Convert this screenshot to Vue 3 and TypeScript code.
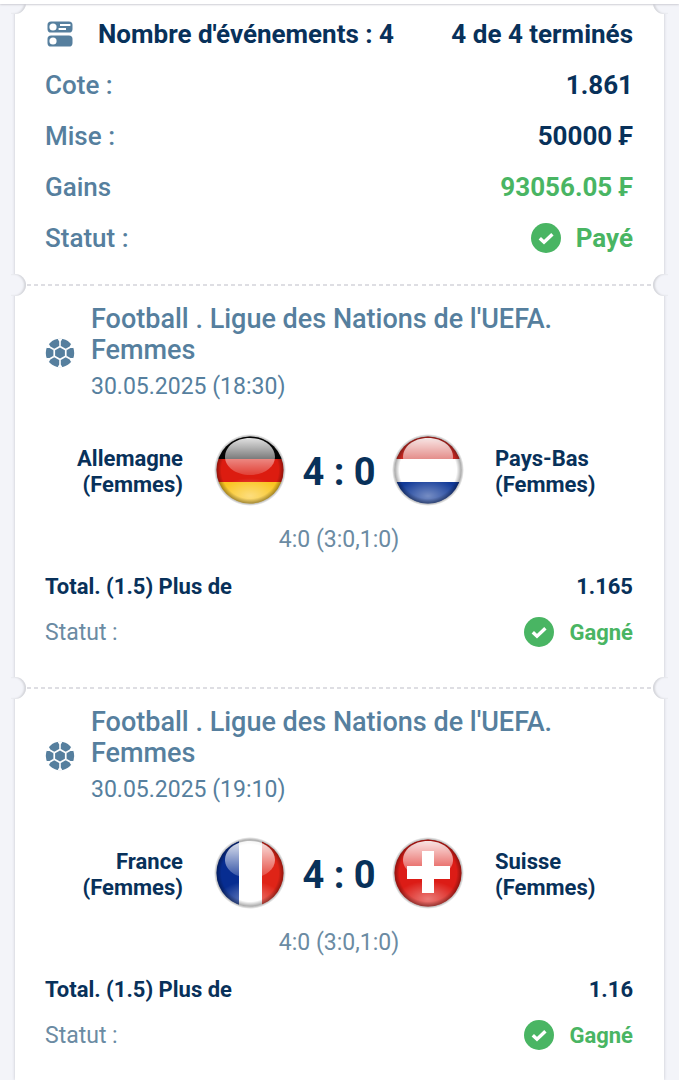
<script setup lang="ts">
type FlagCode = 'de' | 'nl' | 'fr' | 'ch'

interface Team {
  name: string
  flag: FlagCode
}

interface BetEvent {
  id: number
  league: string
  date: string
  home: Team
  away: Team
  score: string
  periods: string
  market: string
  odds: string
  status: string
}

const events: BetEvent[] = [
  {
    id: 1,
    league: "Football . Ligue des Nations de l'UEFA. Femmes",
    date: '30.05.2025 (18:30)',
    home: { name: 'Allemagne (Femmes)', flag: 'de' },
    away: { name: 'Pays-Bas (Femmes)', flag: 'nl' },
    score: '4 : 0',
    periods: '4:0 (3:0,1:0)',
    market: 'Total. (1.5) Plus de',
    odds: '1.165',
    status: 'Gagné',
  },
  {
    id: 2,
    league: "Football . Ligue des Nations de l'UEFA. Femmes",
    date: '30.05.2025 (19:10)',
    home: { name: 'France (Femmes)', flag: 'fr' },
    away: { name: 'Suisse (Femmes)', flag: 'ch' },
    score: '4 : 0',
    periods: '4:0 (3:0,1:0)',
    market: 'Total. (1.5) Plus de',
    odds: '1.16',
    status: 'Gagné',
  },
]

const sides = ['home', 'away'] as const
const seamAngles = [0, 60, 120, 180, 240, 300]
</script>

<template>
  <div class="page">
    <div class="topbar"></div>
    <main class="ticket">
      <section class="part summary">
        <h1 class="row heading">
          <svg class="list-icon" viewBox="0 0 26 26" aria-hidden="true">
            <rect x="0.5" y="0.5" width="25" height="11" rx="3.6" fill="currentColor" />
            <circle cx="6" cy="6" r="3.6" fill="#fff" />
            <path d="M13 4.1h10.4M11.6 7.9h7.4" stroke="#fff" stroke-width="2" />
            <rect x="0.5" y="14.5" width="25" height="11" rx="3.6" fill="currentColor" />
            <circle cx="6" cy="20" r="3.6" fill="#fff" />
          </svg>
          <span class="count">Nombre d'événements : 4</span>
          <span>4 de 4 terminés</span>
        </h1>
        <dl>
          <div class="row"><dt>Cote :</dt><dd>1.861</dd></div>
          <div class="row"><dt>Mise :</dt><dd>50000 ₣</dd></div>
          <div class="row"><dt>Gains</dt><dd class="won">93056.05 ₣</dd></div>
          <div class="row">
            <dt>Statut :</dt>
            <dd class="won state">
              <svg class="check" viewBox="0 0 30 30" aria-hidden="true">
                <circle cx="15" cy="15" r="15" fill="currentColor" />
                <path d="M8.8 15.2l4.2 4 8.4-8" fill="none" stroke="#fff" stroke-width="3.4" />
              </svg>
              Payé
            </dd>
          </div>
        </dl>
      </section>

      <article v-for="event in events" :key="event.id" class="part event">
        <header class="event-head">
          <svg class="ball" viewBox="-15 -15 30 30" aria-hidden="true">
            <circle r="14.2" fill="currentColor" />
            <path
              v-for="angle in seamAngles"
              :key="angle"
              d="M-.8-6L0-7.6.8-6V-11.6L2.6-14.6H-2.6L-.8-11.6z"
              :transform="`rotate(${angle})`"
              fill="#fff"
            />
            <path d="M0-7.6L6.6-3.8V3.8L0 7.6-6.6 3.8V-3.8z" fill="#fff" />
            <path d="M0-5.6L4.9-2.8V2.8L0 5.6-4.9 2.8V-2.8z" fill="currentColor" />
          </svg>
          <div>
            <h2>{{ event.league }}</h2>
            <time>{{ event.date }}</time>
          </div>
        </header>

        <div class="match">
          <template v-for="side in sides" :key="side">
            <span class="team" :class="side">{{ event[side].name }}</span>
            <svg class="flag" :class="side" viewBox="0 0 72 72" aria-hidden="true">
              <defs>
                <clipPath :id="`disc-${event.id}-${side}`"><circle cx="36" cy="36" r="33.5" /></clipPath>
                <linearGradient :id="`gloss-${event.id}-${side}`" x1="0" y1="0" x2="0" y2="1">
                  <stop offset="0" stop-color="#fff" stop-opacity="0.88" />
                  <stop offset="1" stop-color="#fff" stop-opacity="0.16" />
                </linearGradient>
                <radialGradient :id="`rim-${event.id}-${side}`">
                  <stop offset="0.84" stop-color="#000" stop-opacity="0" />
                  <stop offset="1" stop-color="#000" stop-opacity="0.38" />
                </radialGradient>
                <radialGradient :id="`glow-${event.id}-${side}`">
                  <stop offset="0" stop-color="#fff" stop-opacity="0.42" />
                  <stop offset="1" stop-color="#fff" stop-opacity="0" />
                </radialGradient>
                <radialGradient :id="`shade-${event.id}-${side}`">
                  <stop offset="0.88" stop-color="#000" stop-opacity="0.5" />
                  <stop offset="1" stop-color="#000" stop-opacity="0" />
                </radialGradient>
              </defs>
              <circle cx="36" cy="36" r="36" :fill="`url(#shade-${event.id}-${side})`" />
              <g :clip-path="`url(#disc-${event.id}-${side})`">
                <template v-if="event[side].flag === 'de'">
                  <rect width="72" height="25" fill="#050505" />
                  <rect y="25" width="72" height="23" fill="#dc1c10" />
                  <rect y="48" width="72" height="24" fill="#fac520" />
                </template>
                <template v-else-if="event[side].flag === 'nl'">
                  <rect width="72" height="25" fill="#cc2923" />
                  <rect y="25" width="72" height="23" fill="#fff" />
                  <rect y="48" width="72" height="24" fill="#123a98" />
                </template>
                <template v-else-if="event[side].flag === 'fr'">
                  <rect width="25" height="72" fill="#072d91" />
                  <rect x="25" width="23" height="72" fill="#fff" />
                  <rect x="48" width="24" height="72" fill="#df2417" />
                </template>
                <rect v-else width="72" height="72" fill="#dc1c16" />
                <ellipse cx="36" cy="62" rx="32" ry="18" :fill="`url(#glow-${event.id}-${side})`" />
                <circle cx="36" cy="36" r="34" :fill="`url(#rim-${event.id}-${side})`" />
                <path
                  d="M36 4C51 4 61 13 61 23C61 33 50 41 36 41C22 41 11 33 11 23C11 13 21 4 36 4z"
                  :fill="`url(#gloss-${event.id}-${side})`"
                />
                <path
                  v-if="event[side].flag === 'ch'"
                  d="M30 14h12v15h16v13H42v14H30V42H15V29h15z"
                  fill="#fff"
                />
              </g>
            </svg>
          </template>
          <strong class="score">{{ event.score }}</strong>
        </div>

        <p class="periods">{{ event.periods }}</p>
        <p class="line bet"><span>{{ event.market }}</span><span>{{ event.odds }}</span></p>
        <p class="line result">
          <span class="label">Statut :</span>
          <span class="won state">
            <svg class="check" viewBox="0 0 30 30" aria-hidden="true">
              <circle cx="15" cy="15" r="15" fill="currentColor" />
              <path d="M8.8 15.2l4.2 4 8.4-8" fill="none" stroke="#fff" stroke-width="3.4" />
            </svg>
            {{ event.status }}
          </span>
        </p>
      </article>
    </main>
  </div>
</template>

<style>
body {
  margin: 0;
  background: #f3f4f9;
}
</style>

<style scoped>
.page {
  display: flex;
  flex-direction: column;
  min-height: 100vh;
  font-family: Roboto, 'Liberation Sans', sans-serif;
  color: #08315a;
}

.topbar {
  position: relative;
  z-index: 2;
  height: 4px;
  background: #fff;
  box-shadow: 0 1px 2px #cfcfd6;
}

h1,
h2,
p,
dl,
dd {
  margin: 0;
}

.ticket {
  flex: 1;
  margin: 0 15px;
  background: #fff;
  box-shadow: 0 0 3px #c4c5cc;
}

.part {
  position: relative;
  padding: 0 31px 0 30px;
}

/* Punched holes on both edges of the ticket */
.part::before,
.part::after {
  content: '';
  position: absolute;
  top: -12px;
  width: 15px;
  height: 22px;
  background: #f3f4f9;
}

.part::before {
  left: -4px;
  border-radius: 0 11px 11px 0;
  box-shadow: inset -2px 0 2px #d4d5da;
}

.part::after {
  right: -4px;
  border-radius: 11px 0 0 11px;
  box-shadow: inset 2px 0 2px #d4d5da;
}

.summary {
  padding-top: 4px;
  padding-bottom: 21px;
}

.row {
  display: flex;
  align-items: center;
  justify-content: space-between;
  height: 51px;
  font-size: 26px;
  font-weight: 500;
}

.row dt,
.event-head {
  color: #567f9e;
}

.row dd,
.heading {
  font-weight: 700;
}

.list-icon {
  width: 26px;
  height: 26px;
  margin-left: 2px;
  color: #567f9e;
}

.count {
  flex: 1;
  margin-left: 25px;
}

.won,
.row .won {
  color: #49b563;
}

.state {
  display: flex;
  align-items: center;
  gap: 15px;
}

.check {
  width: 30px;
  height: 30px;
}

.event {
  padding-top: 18px;
  padding-bottom: 32px;
  border-top: 2px dashed #e0e0e4;
  border-image: repeating-linear-gradient(90deg, #dedee3 0 4px, #fff 4px 7px) 2;
}

.event:last-child {
  padding-bottom: 16px;
}

.event-head {
  display: flex;
  align-items: center;
  gap: 16px;
}

.event-head > div {
  flex: 1;
}

.ball {
  width: 30px;
  height: 30px;
}

h2 {
  font-size: 27px;
  line-height: 31px;
  font-weight: 500;
}

time {
  display: block;
  margin-top: 6px;
  font-size: 23px;
  line-height: 30px;
}

.match {
  display: grid;
  grid-template-columns: 1fr 72px 106px 72px 1fr;
  grid-template-areas: 'home homeflag score awayflag away';
  align-items: center;
  margin-top: 32px;
}

.team {
  max-width: 118px;
  padding-top: 4px;
  font-size: 22px;
  line-height: 26px;
  font-weight: 700;
}

.team.home {
  grid-area: home;
  justify-self: end;
  margin-right: 31px;
  text-align: right;
}

.team.away {
  grid-area: away;
  margin-left: 31px;
}

.flag {
  width: 72px;
  height: 72px;
}

.flag.home {
  grid-area: homeflag;
}

.flag.away {
  grid-area: awayflag;
}

.score {
  grid-area: score;
  padding-top: 4px;
  font-size: 38px;
  line-height: 44px;
  font-weight: 700;
  text-align: center;
  white-space: nowrap;
}

.periods {
  margin-top: 19px;
  font-size: 23px;
  line-height: 30px;
  text-align: center;
  color: #6b8ba3;
}

.line {
  display: flex;
  align-items: center;
  justify-content: space-between;
  height: 46px;
  font-size: 22px;
}

.bet {
  margin-top: 8px;
  font-weight: 700;
}

.result {
  color: #6b8ba3;
}

.result .label {
  font-size: 23px;
}

.result .won {
  font-weight: 700;
}
</style>
